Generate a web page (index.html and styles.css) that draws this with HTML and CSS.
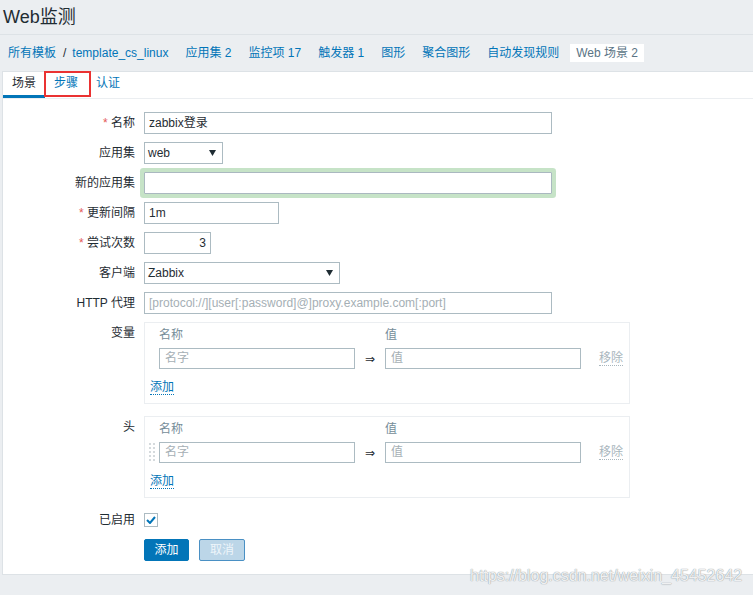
FILE: index.html
```html
<!DOCTYPE html>
<html lang="zh-CN">
<head>
<meta charset="utf-8">
<title>Web监测</title>
<link rel="stylesheet" href="styles.css">
</head>
<body>
<div class="page">
  <header class="title-bar"><h1>Web监测</h1></header>
  <nav class="crumbs">
    <span class="crumb-path"><a>所有模板</a><span class="sep">/</span><a>template_cs_linux</a></span>
    <a class="crumb">应用集 2</a>
    <a class="crumb">监控项 17</a>
    <a class="crumb">触发器 1</a>
    <a class="crumb">图形</a>
    <a class="crumb">聚合图形</a>
    <a class="crumb">自动发现规则</a>
    <span class="crumb current">Web 场景 2</span>
  </nav>
  <main class="panel">
    <div class="tabs">
      <a class="tab active">场景</a>
      <a class="tab marked">步骤</a>
      <a class="tab">认证</a>
    </div>
    <form class="form">
      <div class="row">
        <label class="lbl"><span class="req">*</span> 名称</label>
        <div class="ctl"><div class="input w-wide">zabbix登录</div></div>
      </div>
      <div class="row">
        <label class="lbl">应用集</label>
        <div class="ctl"><div class="select w-app"><span>web</span><svg class="caret" width="7" height="6" viewBox="0 0 7 6"><path d="M0 0H7L3.5 6Z" fill="#1f2c33"/></svg></div></div>
      </div>
      <div class="row">
        <label class="lbl">新的应用集</label>
        <div class="ctl"><div class="input w-wide focus"></div></div>
      </div>
      <div class="row">
        <label class="lbl"><span class="req">*</span> 更新间隔</label>
        <div class="ctl"><div class="input w-mid">1m</div></div>
      </div>
      <div class="row">
        <label class="lbl"><span class="req">*</span> 尝试次数</label>
        <div class="ctl"><div class="input w-num">3</div></div>
      </div>
      <div class="row">
        <label class="lbl">客户端</label>
        <div class="ctl"><div class="select w-agent"><span>Zabbix</span><svg class="caret" width="7" height="6" viewBox="0 0 7 6"><path d="M0 0H7L3.5 6Z" fill="#1f2c33"/></svg></div></div>
      </div>
      <div class="row">
        <label class="lbl">HTTP 代理</label>
        <div class="ctl"><div class="input w-wide placeholder">[protocol://][user[:password]@]proxy.example.com[:port]</div></div>
      </div>
      <div class="row row-box">
        <label class="lbl">变量</label>
        <div class="ctl">
          <div class="pairs">
            <div class="pair-head"><span></span><span>名称</span><span></span><span>值</span><span></span></div>
            <div class="pair-row">
              <span class="handle"></span>
              <div class="input small placeholder">名字</div>
              <span class="arrow">⇒</span>
              <div class="input small placeholder">值</div>
              <a class="remove">移除</a>
            </div>
            <a class="add">添加</a>
          </div>
        </div>
      </div>
      <div class="row row-box2">
        <label class="lbl">头</label>
        <div class="ctl">
          <div class="pairs">
            <div class="pair-head"><span></span><span>名称</span><span></span><span>值</span><span></span></div>
            <div class="pair-row">
              <span class="handle"><svg width="6" height="18" viewBox="0 0 6 18"><g fill="#d5dadd"><rect x="0" y="0" width="2" height="2"/><rect x="4" y="0" width="2" height="2"/><rect x="0" y="4" width="2" height="2"/><rect x="4" y="4" width="2" height="2"/><rect x="0" y="8" width="2" height="2"/><rect x="4" y="8" width="2" height="2"/><rect x="0" y="12" width="2" height="2"/><rect x="4" y="12" width="2" height="2"/><rect x="0" y="16" width="2" height="2"/><rect x="4" y="16" width="2" height="2"/></g></svg></span>
              <div class="input small placeholder">名字</div>
              <span class="arrow">⇒</span>
              <div class="input small placeholder">值</div>
              <a class="remove">移除</a>
            </div>
            <a class="add">添加</a>
          </div>
        </div>
      </div>
      <div class="row row-check">
        <label class="lbl">已启用</label>
        <div class="ctl"><span class="checkbox"><svg width="10" height="8" viewBox="0 0 10 8"><path d="M1 4L4 7L9 1" fill="none" stroke="#0275b8" stroke-width="2"/></svg></span></div>
      </div>
      <div class="row row-buttons">
        <span class="lbl"></span>
        <div class="ctl buttons">
          <button type="button" class="btn primary">添加</button>
          <button type="button" class="btn muted">取消</button>
        </div>
      </div>
    </form>
  </main>
  <div class="watermark">https://blog.csdn.net/weixin_45452642</div>
</div>
</body>
</html>
```

FILE: styles.css
```css
* { box-sizing: border-box; }
html, body { margin: 0; padding: 0; }
body {
  background: #ebeef1;
  font-family: "Liberation Sans", "Noto Sans CJK SC", sans-serif;
  font-size: 12px;
  color: #1f2c33;
  width: 753px;
  height: 595px;
  overflow: hidden;
}
a { color: #0275b8; text-decoration: none; cursor: pointer; }
.page { position: relative; height: 595px; }

.title-bar { height: 35px; border-bottom: 1px solid #dde2e6; }
.title-bar h1 {
  margin: 0;
  padding: 0 3px;
  font-size: 18px;
  font-weight: normal;
  line-height: 35px;
  color: #1f2c33;
}

.crumbs {
  height: 36px;
  display: flex;
  align-items: center;
  gap: 5px;
  padding-left: 2px;
}
.crumbs a, .crumbs .crumb { padding: 0 6px; line-height: 18px; white-space: nowrap; }
.crumb-path { display: flex; align-items: center; padding: 0 0 0 6px; margin-right: 6px; }
.crumb-path a { padding: 0; }
.crumb-path .sep { margin: 0 6px 0 7px; color: #1f2c33; }
.crumb.current { background: #fff; color: #5a7485; }

.panel {
  background: #fff;
  margin-left: 2px;
  border-top: 1px solid #dde2e6;
  border-left: 1px solid #dde2e6;
  border-bottom: 1px solid #dde2e6;
  height: 504px;
}

.tabs {
  display: flex;
  height: 27px;
  border-bottom: 1px solid #ebeef1;
}
.tab {
  position: relative;
  padding: 0 9px;
  line-height: 23px;
  border-bottom: 3px solid transparent;
  color: #0275b8;
}
.tab.active { color: #1f2c33; border-bottom-color: #0275b8; }
.tab.marked::after {
  content: "";
  position: absolute;
  left: -1px;
  right: -4px;
  top: -1px;
  bottom: -2px;
  border: 2px solid #ea3232;
}

.form { padding-top: 13px; display: flex; flex-direction: column; gap: 8px; }
.row { display: grid; grid-template-columns: 132px 1fr; column-gap: 9px; align-items: start; }
.lbl { text-align: right; line-height: 22px; color: #1f2c33; }
.req { color: #e45959; }
.ctl { display: flex; align-items: center; min-height: 22px; }

.input {
  height: 22px;
  border: 1px solid #acbbc2;
  padding: 0 4px;
  line-height: 20px;
  background: #fff;
  white-space: nowrap;
  overflow: hidden;
  color: #1f2c33;
}
.input.placeholder { color: #a5afb5; }
.w-wide { width: 408px; }
.w-mid { width: 135px; }
.w-num { width: 67px; text-align: right; padding-right: 4px; }
.focus { box-shadow: 0 0 0 4px #c6e3c7; border-radius: 1px; border-color: #aab8c0; }

.select {
  height: 22px;
  border: 1px solid #acbbc2;
  padding: 0 6px 0 3px;
  display: flex;
  align-items: center;
  justify-content: space-between;
  line-height: 20px;
}
.w-app { width: 79px; }
.w-agent { width: 196px; }

.pairs {
  width: 486px;
  border: 1px solid #ebeef1;
  padding: 4px 4px 8px;
}
.pair-head, .pair-row {
  display: grid;
  grid-template-columns: 10px 196px 30px 196px auto;
}
.pair-head { height: 17px; line-height: 17px; color: #768d99; margin-bottom: 4px; }
.pair-row { align-items: center; height: 21px; }
.input.small { height: 21px; line-height: 19px; padding: 0 5px; }
.handle { display: flex; align-items: center; height: 21px; }
.handle svg { display: block; margin-top: -2px; }
.arrow {
  text-align: center;
  font-family: "DejaVu Sans", sans-serif;
  font-size: 12px;
  line-height: 21px;
  height: 21px;
  color: #1f2c33;
  padding-top: 1px;
}
.remove {
  justify-self: start;
  margin-left: 18px;
  white-space: nowrap;
  color: #a9b6bd;
  border-bottom: 1px dotted #a9b6bd;
  line-height: 14px;
}
.add {
  display: inline-block;
  margin-top: 11px;
  margin-left: 1px;
  line-height: 14px;
  border-bottom: 1px dotted #0275b8;
}
.row-box { margin-bottom: 4px; }
.row-box2 { margin-bottom: 3px; }
.row-check { margin-bottom: 0; }

.checkbox {
  width: 14px;
  height: 14px;
  border: 1px solid #acbbc2;
  display: flex;
  align-items: center;
  justify-content: center;
  background: #fff;
}
.checkbox svg { display: block; }

.buttons { gap: 10px; }
.btn {
  height: 22px;
  padding: 0;
  font-family: inherit;
  font-size: 12px;
  border: 1px solid #0275b8;
  border-radius: 2px;
  line-height: 20px;
  cursor: pointer;
}
.btn.primary { width: 45px; background: #0275b8; color: #fff; }
.btn.muted { width: 46px; background: #bcd6e8; color: #eef5fa; border-color: #4a90c4; }

.watermark {
  position: absolute;
  left: 470px;
  top: 566px;
  font-size: 16px;
  line-height: 20px;
  color: rgba(255, 255, 255, 0.85);
  text-shadow: 0 0 1px #9aa3a9, 0 0 1px #9aa3a9;
  white-space: nowrap;
}
```
